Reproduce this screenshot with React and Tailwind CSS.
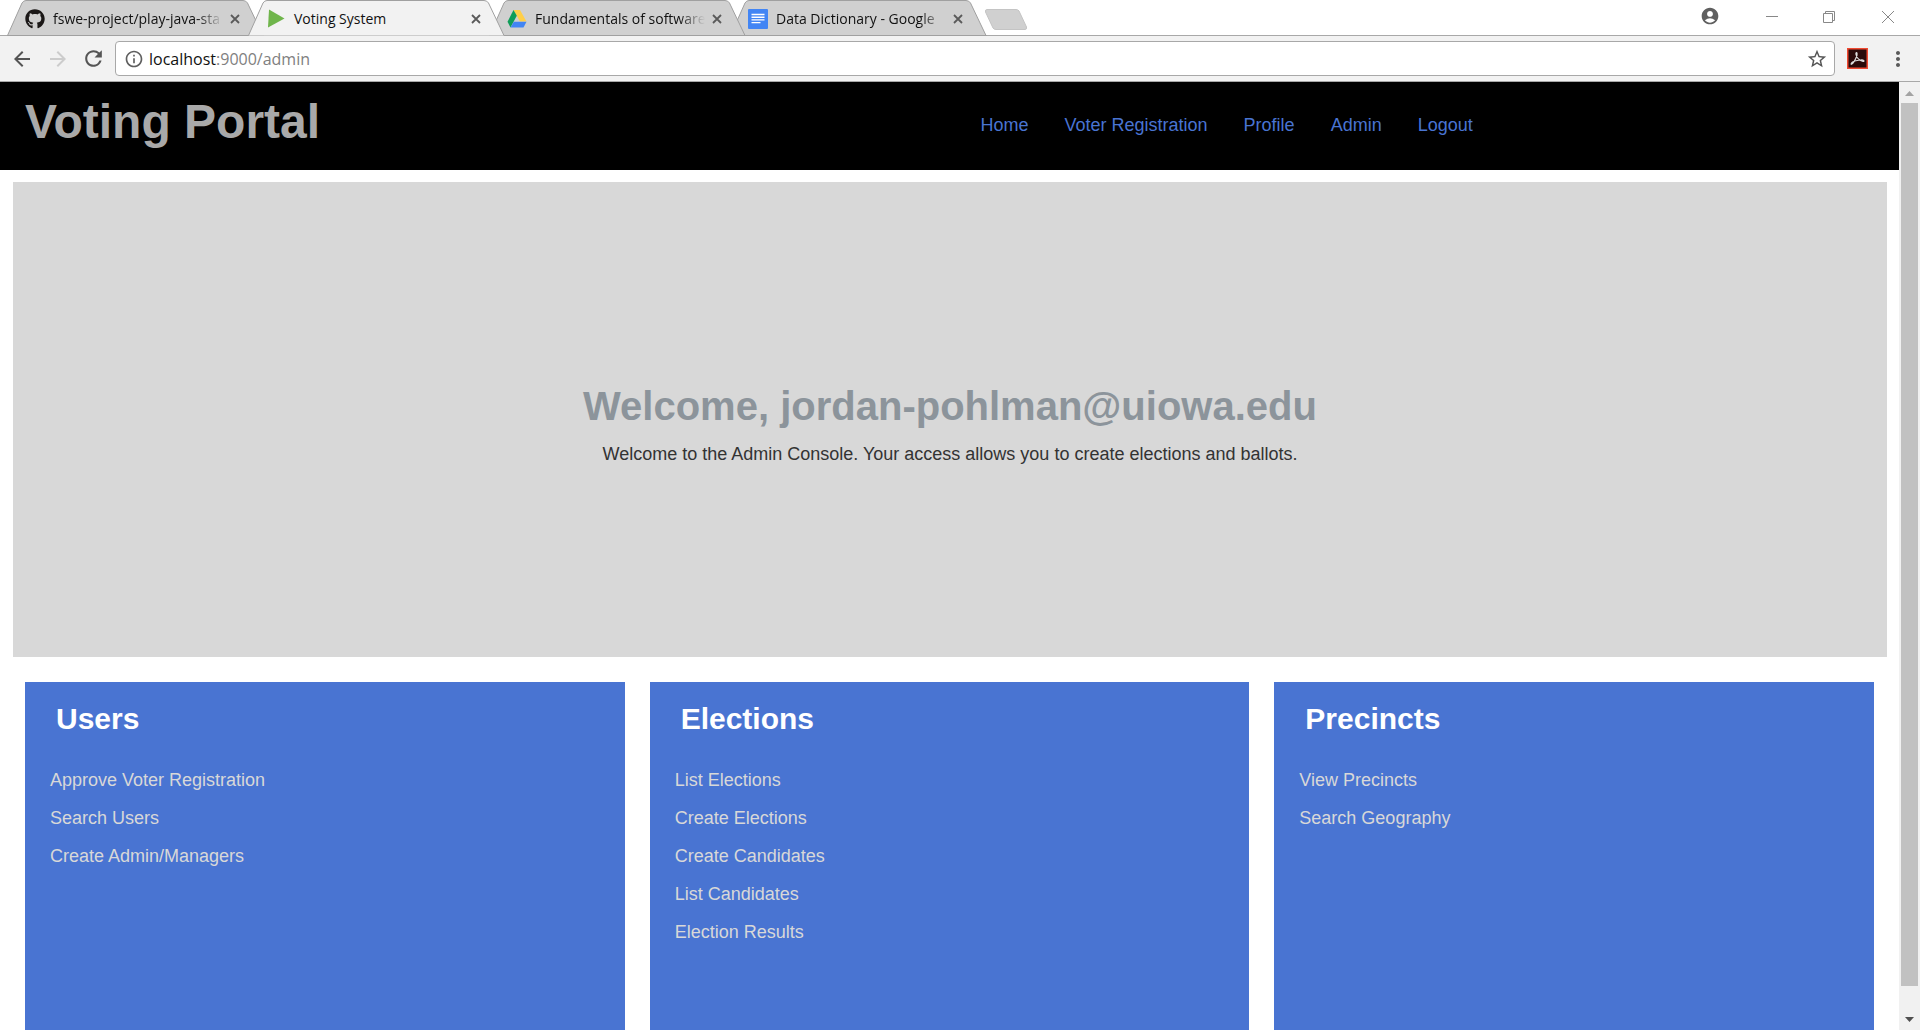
import React from "react";
import { FaGithub } from "react-icons/fa";
import { MdArrowBack, MdArrowForward, MdRefresh, MdInfoOutline, MdStarBorder, MdAccountCircle, MdMoreVert } from "react-icons/md";

const PlayIcon = () => (
  <svg viewBox="0 0 18 20" className="h-5 w-[18px]">
    <path d="M2 0.500 L17.500 9.500 L1 18.500 Z" fill="#6fb54b" />
  </svg>
);

const DriveIcon = () => (
  <svg viewBox="0 0 20 20" className="size-5">
    <path d="M6.500 1 H13 L19.500 12.500 H13 Z" fill="#ffcf48" />
    <path d="M6.500 1 L9.800 6.800 L3.500 18.500 L0.500 12.800 Z" fill="#0f9d58" />
    <path d="M6.800 12.800 H19.500 L16.500 18.500 H3.500 Z" fill="#4285f4" />
  </svg>
);

const DocsIcon = () => (
  <svg viewBox="0 0 20 20" className="size-5">
    <rect width="20" height="20" rx="1" fill="#4285f4" />
    <path d="M3.500 5.500 H16.500 M3.500 8.200 H16.500 M3.500 10.900 H16.500 M3.500 13.600 H12.500" stroke="#fff" strokeWidth="1.400" />
  </svg>
);

const tabs = [
  { title: "fswe-project/play-java-sta", icon: <FaGithub className="size-5 text-[#1b1817]" /> },
  { title: "Voting System", icon: <PlayIcon />, active: true },
  { title: "Fundamentals of software", icon: <DriveIcon /> },
  { title: "Data Dictionary - Google", icon: <DocsIcon /> },
];

function Tab({ title, icon, active, index }) {
  const fill = active ? "#f2f2f2" : "#d0d0d0";
  return (
    <div
      className={
        "relative -mr-4 flex h-9 w-[257px] items-center px-[18px] pt-[2px] " + (active ? "z-20" : "")
      }
      style={active ? undefined : { zIndex: 10 - index }}
    >
      <svg viewBox="0 0 257 36" className="absolute inset-0 h-9 w-[257px]" aria-hidden="true">
        <path d="M0.500 35.500 L15 3 Q16.500 0.500 19 0.500 H236 Q239 0.500 240.500 3 L256 35.500" fill={fill} stroke="#a0a0a0" />
        {!active && <path d="M0 35.500 H257" stroke="#a0a0a0" />}
      </svg>
      <span className="relative flex w-5 shrink-0 justify-center">{icon}</span>
      <span
        className={
          "relative ml-2 min-w-0 flex-1 whitespace-nowrap text-sm text-[#111] " +
          (active ? "" : "[mask-image:linear-gradient(to_right,black_calc(100%-26px),transparent)]")
        }
      >
        {title}
      </span>
      <button type="button" aria-label={"Close " + title} className="relative ml-1 mr-[3px] flex size-4 shrink-0 items-center justify-center">
        <svg viewBox="0 0 10 10" className="size-[10px]">
          <path d="M1 1 L9 9 M9 1 L1 9" stroke="#5a5a5a" strokeWidth="1.800" />
        </svg>
      </button>
    </div>
  );
}

function BrowserChrome() {
  return (
    <div className="shrink-0 font-['Open_Sans','Noto_Sans',sans-serif]">
      <div className="flex h-9 items-start justify-between border-b border-[#a8a8a8] bg-white">
        <div className="flex pl-[7px]">
          {tabs.map((t, i) => (
            <Tab key={t.title} index={i} {...t} />
          ))}
          <button type="button" aria-label="New tab" className="ml-3 mt-2 h-6">
            <svg viewBox="0 0 46 24" className="h-6 w-[46px]">
              <path d="M4 1.500 H33 Q35 1.500 36 3 L43.500 19 Q44 21.500 42 21.500 H13 Q11 21.500 10 20 L2.500 4 Q2 1.500 4 1.500 Z" fill="#d0d0d0" stroke="#c4c4c4" />
            </svg>
          </button>
        </div>
        <div className="flex h-8 items-center gap-[42px] pr-6">
          <button type="button" aria-label="Account" className="mr-[2px]">
            <MdAccountCircle className="size-5 text-[#5f5f5f]" />
          </button>
          <button type="button" aria-label="Minimize">
            <svg viewBox="0 0 16 16" className="size-4"><path d="M2 8.500 H14" stroke="#888" /></svg>
          </button>
          <button type="button" aria-label="Restore">
            <svg viewBox="0 0 16 16" className="size-4" fill="none" stroke="#888">
              <path d="M1.500 5.500 H10.500 V14.500 H1.500 Z M3.500 5.500 V3.500 H12.500 V12.500 H10.500" />
            </svg>
          </button>
          <button type="button" aria-label="Close window">
            <svg viewBox="0 0 16 16" className="size-4"><path d="M2 3 L14 15 M14 3 L2 15" stroke="#888" /></svg>
          </button>
        </div>
      </div>
      <div className="flex h-[46px] items-center border-b border-[#a8a8a8] bg-[#f2f2f2] px-[10px]">
        <button type="button" aria-label="Back"><MdArrowBack className="size-6 text-[#555]" /></button>
        <button type="button" aria-label="Forward" className="ml-3"><MdArrowForward className="size-6 text-[#ccc]" /></button>
        <button type="button" aria-label="Reload" className="ml-[11px]"><MdRefresh className="size-[25px] text-[#555]" /></button>
        <div className="ml-[9px] flex h-[35px] flex-1 items-center rounded-sm border border-[#a8a8a8] bg-white pl-2 pr-[6px]">
          <MdInfoOutline className="size-5 text-[#5f5f5f]" />
          <div className="relative ml-[5px] flex-1 text-base leading-6">
            <input aria-label="Address" defaultValue="localhost:9000/admin" className="w-full bg-transparent text-[#808080] outline-none" />
            <span aria-hidden="true" className="pointer-events-none absolute left-0 top-0 bg-white text-[#111]">localhost</span>
          </div>
          <button type="button" aria-label="Bookmark"><MdStarBorder className="size-[22px] text-[#555]" /></button>
        </div>
        <button type="button" aria-label="Acrobat" className="ml-3">
          <svg viewBox="0 0 21 21" className="size-[21px]">
            <rect x="0.750" y="0.750" width="19.500" height="19.500" fill="#2a0a0a" stroke="#f04a32" strokeWidth="1.500" />
            <path d="M4 16.500 C6 16 9 11 10 7 C10.500 4 8.500 4 9 6.500 C9.500 9.500 12.500 13 16 13.500 C18 13.500 17 11.500 13.500 12 C10 12.300 5.500 13.500 4.500 15 C4 16 4 16.500 4 16.500" fill="none" stroke="#ddd" strokeWidth="1.200" />
          </svg>
        </button>
        <button type="button" aria-label="Menu" className="ml-[18px]"><MdMoreVert className="size-6 text-[#5a5a5a]" /></button>
      </div>
    </div>
  );
}

const nav = ["Home", "Voter Registration", "Profile", "Admin", "Logout"];

const panels = [
  { title: "Users", links: ["Approve Voter Registration", "Search Users", "Create Admin/Managers"] },
  { title: "Elections", links: ["List Elections", "Create Elections", "Create Candidates", "List Candidates", "Election Results"] },
  { title: "Precincts", links: ["View Precincts", "Search Geography"] },
];

function Page() {
  return (
    <div className="flex min-w-0 flex-1 flex-col font-['Liberation_Sans',Arial,sans-serif] text-lg leading-[25px]">
      <header className="grid h-[88px] shrink-0 grid-cols-2 bg-black">
        <h1 className="pl-[25px] pt-3 text-5xl font-bold leading-[56px] text-[#a9a9a9]">Voting Portal</h1>
        <nav className="flex items-start gap-9 pl-[31px] pt-[31px] text-[#4974d2]">
          {nav.map((n) => (
            <a key={n} href="#">{n}</a>
          ))}
        </nav>
      </header>
      <section className="ml-[13px] mr-3 mt-3 flex h-[475px] shrink-0 flex-col items-center bg-[#d8d8d8] pt-[199px] text-center">
        <h2 className="text-[40px] font-bold leading-[50px] text-[#8c949b]">Welcome, jordan-pohlman@uiowa.edu</h2>
        <p className="mt-[11px] text-[#333]">Welcome to the Admin Console. Your access allows you to create elections and ballots.</p>
      </section>
      <main className="grid flex-1 grid-cols-3 gap-[25px] px-[25px] pt-[25px]">
        {panels.map((p) => (
          <section key={p.title} className="bg-[#4974d2] px-[25px]">
            <h3 className="pl-[6px] pt-[17px] text-3xl font-bold leading-10 text-white">{p.title}</h3>
            <ul className="mt-[29px] flex flex-col gap-[13px] text-[#d8d8d8]">
              {p.links.map((l) => (
                <li key={l}><a href="#">{l}</a></li>
              ))}
            </ul>
          </section>
        ))}
      </main>
    </div>
  );
}

function Scrollbar() {
  return (
    <div className="flex w-[21px] shrink-0 flex-col items-center bg-[#f1f1f1]" aria-hidden="true">
      <svg viewBox="0 0 21 21" className="size-[21px]"><path d="M6 14 L10.500 9 L15 14 Z" fill="#a3a3a3" /></svg>
      <div className="w-[17px] flex-1 bg-[#c1c1c1]" />
      <div className="h-[23px]" />
      <svg viewBox="0 0 21 21" className="size-[21px]"><path d="M6 8 L10.500 13 L15 8 Z" fill="#505050" /></svg>
    </div>
  );
}

export default function App() {
  return (
    <div className="flex h-screen flex-col overflow-hidden bg-white">
      <BrowserChrome />
      <div className="flex min-h-0 flex-1">
        <Page />
        <Scrollbar />
      </div>
    </div>
  );
}
